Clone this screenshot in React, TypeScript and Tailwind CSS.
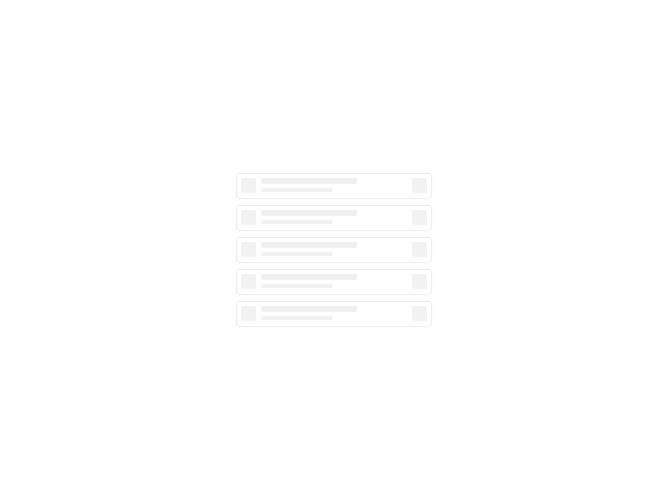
import React from 'react';

const ROWS = [0, 1, 2, 3, 4];

function SkeletonRow() {
  return (
    <div className="flex items-center gap-[5px] h-[26px] px-[4px] rounded-[4px] border border-[#ededed] bg-white shadow-[0_0_2px_rgba(0,0,0,0.04)]">
      <div className="w-[15px] h-[15px] rounded-[2px] bg-[#f2f2f2]" />
      <div className="flex-1 flex flex-col gap-[4px] -mt-[1px]">
        <div className="w-[96px] h-[6px] rounded-[2px] bg-[#f0f0f0]" />
        <div className="w-[72px] h-[4px] rounded-[2px] bg-[#f0f0f0]" />
      </div>
      <div className="w-[15px] h-[15px] rounded-[2px] bg-[#f2f2f2]" />
    </div>
  );
}

export default function App() {
  return (
    <div className="w-full h-screen bg-white flex items-center justify-center">
      <div className="w-[196px] -mt-[2px] -ml-[1px] flex flex-col gap-[6px] blur-[0.4px]">
        {ROWS.map((i) => (
          <SkeletonRow key={i} />
        ))}
      </div>
    </div>
  );
}
